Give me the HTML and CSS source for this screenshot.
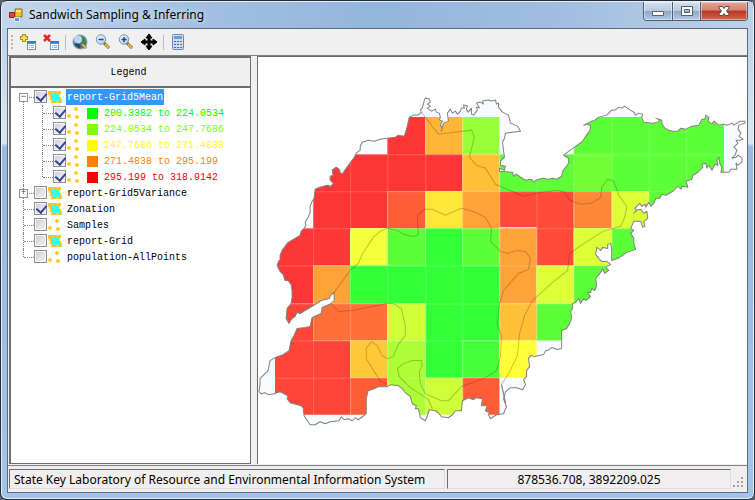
FILE: index.html
```
<!DOCTYPE html>
<html lang="en">
<head>
<meta charset="utf-8">
<title>Sandwich Sampling &amp; Inferring</title>
<link rel="stylesheet" href="styles.css">
</head>
<body>
<svg class="defs" width="0" height="0" aria-hidden="true">
  <defs>
    <symbol id="poly" viewBox="0 0 14 12"><path d="M0 0h13v3h-1v3h1v2h1v4H3V9H2V6H1V4H0z" fill="#ffc832"/><path d="M3 2h7v2h1v3h1v3H5V8H4V5H3z" fill="#32ffff"/></symbol>
    <symbol id="dots" viewBox="0 0 14 12"><g fill="#ffc832"><circle cx="9" cy="2" r="2"/><circle cx="2" cy="9" r="2"/><circle cx="10" cy="10" r="2"/></g></symbol>
    <symbol id="table" viewBox="0 0 9 9"><path d="M0 0h9v9H0z" fill="#6b93dc"/><path d="M0 0h9v2H0z" fill="#3f74cf"/><path d="M1 3h7v5H1z" fill="#fff"/><path d="M2 4h1v1H2zM4 4h3v1H4zM2 6h1v1H2zM4 6h3v1H4z" fill="#8fb0e6"/></symbol>
    <linearGradient id="glass" x2="1" y2="1"><stop stop-color="#fff"/><stop offset="1" stop-color="#9ec4ef"/></linearGradient>
  </defs>
</svg>
<main class="window">
  <header class="titlebar">
    <svg class="app" width="14" height="14" viewBox="0 0 14 14"><path d="M6 1h7v8H6z" fill="#f5bd28" stroke="#8d6a27"/><path d="M7 2h5v2H7z" fill="#ffe98c"/><path d="M.5 4.500h5v5h-5z" fill="#d94a33" stroke="#8b241c"/><path d="M5.500 9.500h5v4h-5z" fill="#5f91df" stroke="#dfe9fa"/></svg>
    <h1>Sandwich Sampling &amp; Inferring</h1>
    <div class="controls">
      <button class="min" aria-label="Minimize"><svg width="14" height="14" viewBox="0 0 14 14"><path d="M1.500 7.500h11v4h-11z" fill="#fff" stroke="#56606f"/></svg></button>
      <button class="max" aria-label="Maximize"><svg width="14" height="14" viewBox="0 0 14 14"><path fill-rule="evenodd" d="M1.500 2.500h11v9h-11zM4.500 5.500v3h5v-3z" fill="#fff" stroke="#56606f"/></svg></button>
      <button class="close" aria-label="Close"><svg width="14" height="14" viewBox="0 0 14 14"><path d="M2 2.500h3.500L7 4.500l1.500-2H12v1.500L9.500 7l2.500 3v1.500H8.500L7 9.500l-1.500 2H2V10l2.500-3L2 4z" fill="#fff" stroke="#5c4650"/></svg></button>
    </div>
  </header>
  <section class="client">
    <nav class="toolbar">
      <span class="grip"></span>
      <button aria-label="Add layer"><svg width="18" height="18" viewBox="0 0 18 18"><path d="M3.500 1.500h3v2h2v3h-2v2h-3v-2h-2v-3h2z" fill="#f9e24a" stroke="#a08a15"/><use href="#table" x="8" y="8" width="9" height="9"/></svg></button>
      <button aria-label="Remove layer"><svg width="18" height="18" viewBox="0 0 18 18"><path d="m2 2 6 6M8 2 2 8" stroke="#e32428" stroke-width="2.600"/><use href="#table" x="8" y="8" width="9" height="9"/></svg></button>
      <span class="sep"></span>
      <button aria-label="Full extent"><svg width="18" height="18" viewBox="0 0 18 18"><circle cx="9" cy="9" r="7" fill="#3f7cb8" stroke="#8499ad"/><path d="M11 3l3 3 1 4-3 2-2-3zM4 11l3 1 1 3-3-1z" fill="#2f9147"/><path d="M4 8l4 2 2 4-2 1-4-3z" fill="#22466f"/><circle cx="7" cy="6.500" r="4" fill="#d7eefb" opacity=".8"/><path d="m10 10 5 5" stroke="#6f5822" stroke-width="3"/><path d="m11 11 4 4" stroke="#e1b84c" stroke-width="2"/></svg></button>
      <button aria-label="Zoom out"><svg width="18" height="18" viewBox="0 0 18 18"><path d="m10 10 5 5" stroke="#6f5822" stroke-width="3"/><path d="m11 11 4 4" stroke="#e1b84c" stroke-width="2"/><circle cx="7" cy="6.500" r="4.700" fill="url(#glass)" stroke="#7690b2"/><path d="M4.500 6.500h5" stroke="#23476e" stroke-width="1.500"/></svg></button>
      <button aria-label="Zoom in"><svg width="18" height="18" viewBox="0 0 18 18"><path d="m10 10 5 5" stroke="#6f5822" stroke-width="3"/><path d="m11 11 4 4" stroke="#e1b84c" stroke-width="2"/><circle cx="7" cy="6.500" r="4.700" fill="url(#glass)" stroke="#7690b2"/><path d="M4.500 6.500h5M7 4v5" stroke="#23476e" stroke-width="1.500"/></svg></button>
      <button aria-label="Pan"><svg width="18" height="18" viewBox="0 0 18 18"><path d="M9 1l3 4h-2v3h3V6l4 3-4 3v-2h-3v3h2l-3 4-3-4h2v-3H5v2L1 9l4-3v2h3V5H6z" stroke="#000"/></svg></button>
      <span class="sep"></span>
      <button aria-label="Calculate"><svg width="18" height="18" viewBox="0 0 18 18"><rect x="3.500" y="1.500" width="11" height="15" rx="1" fill="#cbdcf4" stroke="#6a87c0"/><path d="M5 3h8v3H5z" fill="#7199d6"/><path d="M5 8h2v1H5zM8 8h2v1H8zM5 11h2v1H5zM8 11h2v1H8zM5 14h2v1H5zM8 14h2v1H8zM11 14h2v1h-2z" fill="#3b65b3"/><path d="M11 8h2v1h-2zM11 11h2v1h-2z" fill="#d14c52"/></svg></button>
    </nav>
    <div class="split">
      <aside class="legend">
        <h2>Legend</h2>
        <ul class="tree">
          <li><div class="row"><button class="expander" aria-label="Collapse">−</button><label><input type="checkbox" checked><svg class="ico"><use href="#poly"/></svg><span class="name selected">report-Grid5Mean</span></label></div>
            <ul>
              <li><label class="row"><input type="checkbox" checked><svg class="ico"><use href="#dots"/></svg><i class="swatch"></i><span class="range lime">200.3382 to 224.0534</span></label></li>
              <li><label class="row"><input type="checkbox" checked><svg class="ico"><use href="#dots"/></svg><i class="swatch"></i><span class="range chartreuse">224.0534 to 247.7686</span></label></li>
              <li><label class="row"><input type="checkbox" checked><svg class="ico"><use href="#dots"/></svg><i class="swatch"></i><span class="range yellow">247.7686 to 271.4838</span></label></li>
              <li><label class="row"><input type="checkbox" checked><svg class="ico"><use href="#dots"/></svg><i class="swatch"></i><span class="range orange">271.4838 to 295.199</span></label></li>
              <li><label class="row"><input type="checkbox" checked><svg class="ico"><use href="#dots"/></svg><i class="swatch"></i><span class="range red">295.199 to 318.9142</span></label></li>
            </ul>
          </li>
          <li><div class="row"><button class="expander" aria-label="Expand">+</button><label><input type="checkbox"><svg class="ico"><use href="#poly"/></svg><span class="name">report-Grid5Variance</span></label></div></li>
          <li><div class="row"><label><input type="checkbox" checked><svg class="ico"><use href="#poly"/></svg><span class="name">Zonation</span></label></div></li>
          <li><div class="row"><label><input type="checkbox"><svg class="ico"><use href="#dots"/></svg><span class="name">Samples</span></label></div></li>
          <li><div class="row"><label><input type="checkbox"><svg class="ico"><use href="#poly"/></svg><span class="name">report-Grid</span></label></div></li>
          <li><div class="row"><label><input type="checkbox"><svg class="ico"><use href="#dots"/></svg><span class="name">population-AllPoints</span></label></div></li>
        </ul>
      </aside>
      <div class="map">
        <svg viewBox="258 57 488 405" preserveAspectRatio="xMinYMin meet" role="img" aria-label="Mean by grid cell">
          <defs>
            <path id="coast" d="M280 260V255L282 250 288 242 295 238 300 235 301 231 304 228 306 225 305 222 308 217 310 212 310 206 312 201 314 198 315 189 320 187 327 185 331 186 333 183 330 180 330 176 333 175 332 170 336 167 339 169 340 172 342 174 346 168 351 161 354 157 356 153 360 150 360 146 362 142 368 140 374 141 380 139 387 138 395 137 398 135 404 136 407 126 409 117 413 115 418 115 421 112 420 110 422 108 424 100 425 98 429 99 430 102 427 104 430 106 427 108 431 111 435 109 436 112 439 113 440 117 439 120 442 121 440 125 442 128 441 131 443 123 448 121 447 113 450 109 452 113 455 111 457 114 460 111 461 108 464 108 463 105 467 106 466 109 468 112 471 108 471 114 473 115 477 110 476 107 479 108 476 103 480 102 483 104 482 101 488 100 491 101 495 100 496 104 498 103 498 107 502 112 508 115 510 123 517 126 520 131 512 132 505 133 504 138 502 142 503 150 504 157 500 161 500 165 505 166 504 170 499 168 499 171 512 172 513 176 516 174 520 177 525 180 531 179 533 182 535 180 542 178 548 179 552 178 556 179 561 176 562 171 565 167 568 163 568 158 563 155 571 149 578 144 582 141 585 136 589 131 590 126 587 124 583 125 591 121 594 120 598 117 606 115 611 110 614 110 618 107 621 108 624 106 628 109 633 112 635 115 638 113 642 114 641 118 643 122 652 123 657 122 659 120 655 118 661 120 661 123 664 128 668 130 672 131 677 131 680 128 685 129 691 126 698 125 701 119 704 119 705 115 708 117 707 121 711 124 713 121 718 125 722 124 727 125 731 123 733 125 739 121 744 121 744 123 738 125 737 129 740 133 738 136 742 139 739 140 735 140 737 143 733 147 736 150 734 155 731 158 735 157 737 155 741 158 741 162 737 165 735 163 736 169 730 169 728 172 720 172 721 167 719 164 718 157 716 160 717 165 714 164 712 168 711 170 708 165 706 168 705 163 701 164 702 167 697 172 692 175 691 179 685 181 687 187 681 186 680 189 677 186 675 188 672 191 665 195 661 194 659 198 655 198 653 203 650 206 648 202 645 207 645 204 641 206 639 203 634 208 636 210 633 213 636 210 640 209 643 213 646 211 647 218 643 221 644 226 642 227 640 221 633 221 630 228 633 230 630 233 633 238 633 243 635 249 626 252 619 257 611 260 611 250 610 243 607 244 607 248 602 247 600 250 596 247 595 254 598 258 601 261 606 261 610 264 605 267 608 270 604 273 602 268 600 272 595 278 596 285 594 290 591 288 590 292 587 292 590 296 585 300 583 298 580 303 578 298 575 302 572 303 572 308 570 311 571 317 569 323 566 328 561 330 561 348 557 349 551 347 547 350 545 350 543 354 534 356 530 355 528 358 529 366 526 370 526 376 523 379 525 384 522 389 516 387 510 387 505 391 504 395 503 398 506 406 503 413 496 414 490 418 488 414 489 412 485 410 487 405 481 405 482 398 476 397 473 399 468 397 462 400 461 410 455 410 452 414 448 417 441 416 438 412 435 410 429 409 427 415 425 420 420 417 418 408 415 408 416 405 412 403 410 396 405 392 402 388 398 385 391 384 387 386 378 386 374 388 368 390 366 398 366 405 366 413 361 417 358 419 355 417 352 420 348 418 344 419 341 416 339 420 330 421 325 423 320 421 315 424 310 424 304 415 303 407 301 405 290 402 287 398 288 395 280 391 277 392 274 393 268 394 265 392 261 393 259 391 260 384 260 378 264 374 268 370 270 360 275 357 283 354 289 350 291 340 294 335 297 328 305 327 310 326 312 317 321 313 322 307 331 303 334 300 334 292 331 294 329 298 321 300 315 304 305 310 300 313 297 312 295 316 291 319 289 323 286 318 287 308 291 303 292 297 292 290 291 284 288 280 285 280 283 274 280 271 277 265 279 260Z"/>
            <clipPath id="land"><use href="#coast"/></clipPath>
          </defs>
          <use href="#coast" fill="#f7fbff"/>
          <g clip-path="url(#land)">
            <path fill="#ff3636" d="M387 117h38v37h37v37h-75v37h-37v37h-37v38h-38v-75h38v-74h74z"/>
            <path fill="#ff4538" d="M275 303h38v37h37v74h-75z"/>
            <path fill="#ff4b38" d="M499 191h74v37h-37v-1h-37zM536 228h37v37h-37z"/>
            <path fill="#5dff36" d="M573 117h150v150h-75v-76H499v-37h74zM611 228h37v37h-37v38h-38v37h-37v-37h37v-38h38zM387 228h38v37h-38zM462 228h37v37h-37z"/>
            <path fill="#70ff36" d="M573 154h38v37h-38z"/>
            <path fill="#ffb638" d="M425 117h37v37h-37z"/>
            <path fill="#99ff38" d="M462 117h37v37h-37z"/>
            <path fill="#ffc038" d="M462 154h37v37h-37zM499 303h37v37h-37z"/>
            <path fill="#ff5c38" d="M387 191h38v37h-38zM350 377h37v37h-37zM462 377h37v37h-37z"/>
            <path fill="#ffe638" d="M425 191h37v37h-37z"/>
            <path fill="#ffa238" d="M462 191h37v37h37v75h-37v-75h-37zM313 265h37v38h-37z"/>
            <path fill="#ff8838" d="M573 191h38v37h-38z"/>
            <path fill="#dcff36" d="M611 191h37v37h-37v37h-38v38h-37v-38h37v-37h38z"/>
            <path fill="#f3ff38" d="M350 228h37v37h-37z"/>
            <path fill="#32ff36" d="M425 228h37v37h37v75h-37v37h-37v-74h-75v-38h75z"/>
            <path fill="#ff7038" d="M313 303h74v37h-74z"/>
            <path fill="#ceff38" d="M387 303h38v37h-38zM425 377h37v37h-37z"/>
            <path fill="#ffc838" d="M350 340h37v37h-37z"/>
            <path fill="#acff36" d="M387 340h38v74h-38z"/>
            <path fill="#46ff38" d="M462 340h37v37h-37z"/>
            <path fill="#ffff38" d="M499 340h37v37h-37z"/>
            <path class="grid" d="M313.500 154v260M350.500 154v260M387.500 117v297M425.500 117v297M462.500 117v297M499.500 117v297M536.500 154v186M573.500 117v186M611.500 117v148M648.500 117v111M685.500 117v74M313 154.500h410M313 191.500h372M275 228.500h373M275 265.500h336M275 303.500h298M275 340.500h261M275 377.500h261"/>
          </g>
          <use href="#coast" class="coast"/>
          <g class="zones">
            <path d="M421 112 425 117 438 134 471 130 474 137 469 157 476 165 485 168 495 184 523 196 541 192 557 190 564 192 569 200 580 204 591 203 600 197 601 187 607 179 613 181 618 195 626 206 624 217 620 226 602 231 585 242 569 253 567 270 552 282 532 300 524 315 519 333 517 355 508 373 501 384 505 402"/>
            <path d="M331 303 338 311 352 310 387 303 393 303 401 308 405 325 405 335 398 344 393 356 387 358 382 355 377 345 371 341 366 348 366 358 374 371 380 380 387 384M334 292 350 270 358 263 363 252 373 237 380 231 387 228 397 230 403 234 413 236 418 234 417 215 424 209 432 209 445 215 461 208 475 212 485 217 491 228 490 241 500 251 507 253 516 250 525 251 530 258 528 269 518 273 503 290 499 303 497 323 501 336 500 356 496 370 485 377 461 386 448 400 441 400 425 393 420 383 419 371 422 365 421 360 412 360 403 363 397 368 399 376 410 387 428 399 432 408"/>
            <path class="coast" d="M501 384 505 402"/>
          </g>
        </svg>
      </div>
    </div>
    <footer class="status">
      <span class="org">State Key Laboratory of Resource and Environmental Information System</span>
      <output class="coords">878536.708, 3892209.025</output>
      <svg class="sizer" width="12" height="12" viewBox="0 0 12 12"><path d="M8 0h2v2H8zM4 4h2v2H4zM8 4h2v2H8zM0 8h2v2H0zM4 8h2v2H4zM8 8h2v2H8z" fill="#a5a3a3"/></svg>
    </footer>
  </section>
</main>
</body>
</html>
```
FILE: styles.css
```
* { box-sizing: border-box; }
body { margin: 0; background: #5c6470; font-family: "Noto Sans", "Open Sans", sans-serif; font-size: 12px; color: #000; }
h1, h2, ul { margin: 0; padding: 0; font-weight: normal; list-style: none; }
button { padding: 0; border: 0; background: none; font: inherit; }
svg { display: block; flex: none; }
.defs { position: absolute; }

.window {
  display: flex; flex-direction: column; height: 100vh; padding: 1px 6px 6px;
  border: 1px solid #222b38; border-radius: 7px;
  background: linear-gradient(#a5c1e2, #bdd2ea 28px, #dce6f2 142px, #99badf 146px, #a2c3ea);
  box-shadow: inset 0 0 0 1px #e5f0fb;
}
.titlebar { display: flex; height: 26px; flex: none; align-items: center; margin: 0 -5px; padding: 0 5px 0 7px; gap: 6px; background: linear-gradient(90deg, #c3d6ea, #a3c0e1 25%, #94b5dc 50%, #a1bee0 75%, #bfd1e7); }
.titlebar h1 { flex: 1; font-size: 12px; line-height: 18px; text-shadow: 0 0 6px #fff; white-space: nowrap; }
.controls { display: flex; align-self: flex-start; height: 19px; border: 1px solid #4d5d75; border-top: 0; border-radius: 0 0 4px 4px; overflow: hidden; }
.controls button { display: flex; align-items: center; justify-content: center; width: 28px; background: linear-gradient(#d4dfed, #b9cadf 48%, #8fa6c4 50%, #b3c9e3); box-shadow: inset 0 0 0 1px #ffffff70; }
.controls button + button { border-left: 1px solid #4d5d75; }
.controls .close { width: 47px; background: linear-gradient(#e5a391, #d58271 45%, #b93622 50%, #d1684b); }

.client { display: flex; flex: 1; flex-direction: column; min-height: 0; border: 1px solid #5d6b7e; background: #f0eeee; }
.toolbar { display: flex; flex: none; height: 26px; align-items: center; gap: 5px; padding: 0 3px; background: #f0f0f0; }
.toolbar .grip { width: 2px; height: 14px; margin-right: 1px; background: repeating-linear-gradient(#b9b9b9 0 2px, transparent 2px 4px); }
.toolbar .sep { width: 1px; height: 15px; background: #bdbdbd; }

.split { display: flex; flex: 1; gap: 6px; min-height: 0; border-top: 1px solid #808080; border-bottom: 1px solid #808080; padding: 0 0 1px 1px; }
.legend { display: flex; flex-direction: column; width: 242px; flex: none; border: 2px solid #6d6d6d; border-right-width: 1px; border-bottom-width: 1px; background: #fff; font-family: "Liberation Mono", monospace; font-size: 10px; }
.legend h2 { height: 30px; padding-right: 4px; border-bottom: 2px solid #6d6d6d; background: #f0f0f0; font-size: 10px; line-height: 30px; text-align: center; }
.tree { padding: 1px 0 0 8px; line-height: 16px; white-space: nowrap; }
.tree li { position: relative; padding-left: 15px; }
.tree li ul { margin-left: 4px; }
.tree li::before { content: ""; position: absolute; left: 4px; top: 0; height: 100%; border-left: 1px dotted #808080; }
.tree > li:first-child::before { top: 8px; }
.tree li:last-child::before { height: 8px; }
.tree li::after { content: ""; position: absolute; left: 5px; top: 8px; width: 10px; border-top: 1px dotted #808080; }
.row, .row label { display: flex; height: 16px; align-items: center; }
.tree input { appearance: none; width: 13px; height: 13px; flex: none; margin: 0 1px 1px 0; border: 1px solid #8e8f8f; background: linear-gradient(135deg, #c8ced6, #f6f6f6); box-shadow: inset 0 0 0 1px #f4f4f4; }
.tree input:checked::after { content: ""; display: block; width: 5px; height: 8px; margin: 0 0 0 3px; border: solid #34459b; border-width: 0 2px 2px 0; transform: rotate(40deg); }
.expander { position: absolute; z-index: 1; left: 0; top: 4px; width: 9px; height: 9px; border: 1px solid #919191; background: #fff; color: #27447d; font-size: 9px; line-height: 7px; }
.ico { width: 14px; height: 12px; }
.name, .range { padding-top: 2px; line-height: 14px; }
.name { margin-left: 4px; padding-left: 1px; padding-right: 1px; }
.selected { background: #3399ff; color: #fff; }
.swatch { width: 11px; height: 11px; margin: 0 6px; }
.swatch:has(+ .lime) { background: #00ff00; }
.swatch:has(+ .chartreuse) { background: #80ff00; }
.swatch:has(+ .yellow) { background: #ffff00; }
.swatch:has(+ .orange) { background: #ff8000; }
.swatch:has(+ .red) { background: #ff0000; }
.lime { color: #00ff00; }
.chartreuse { color: #80ff00; }
.yellow { color: #ffff00; }
.orange { color: #ff8000; }
.red { color: #ff0000; }

.map { flex: 1; min-width: 0; border: 1px solid #696969; border-width: 1px 0 0 1px; background: #fff; }
.map svg { width: 100%; height: 100%; }
.zones { fill: none; stroke: #502800; stroke-opacity: .28; stroke-width: 1; }
.coast { fill: none; stroke: #808080; stroke-opacity: 1; stroke-width: 1; stroke-linejoin: round; }
.grid { fill: none; stroke: #fff; stroke-opacity: .2; }

.status { display: flex; flex: none; height: 26px; padding: 3px 2px 3px 1px; gap: 2px; line-height: 20px; white-space: nowrap; }
.status > span, .status > output { border: 1px solid; border-color: #6d6d6d #dedede #dedede #6d6d6d; }
.org { width: 436px; padding-left: 4px; }
.coords { flex: 1; text-align: center; }
.sizer { align-self: flex-end; }
```
